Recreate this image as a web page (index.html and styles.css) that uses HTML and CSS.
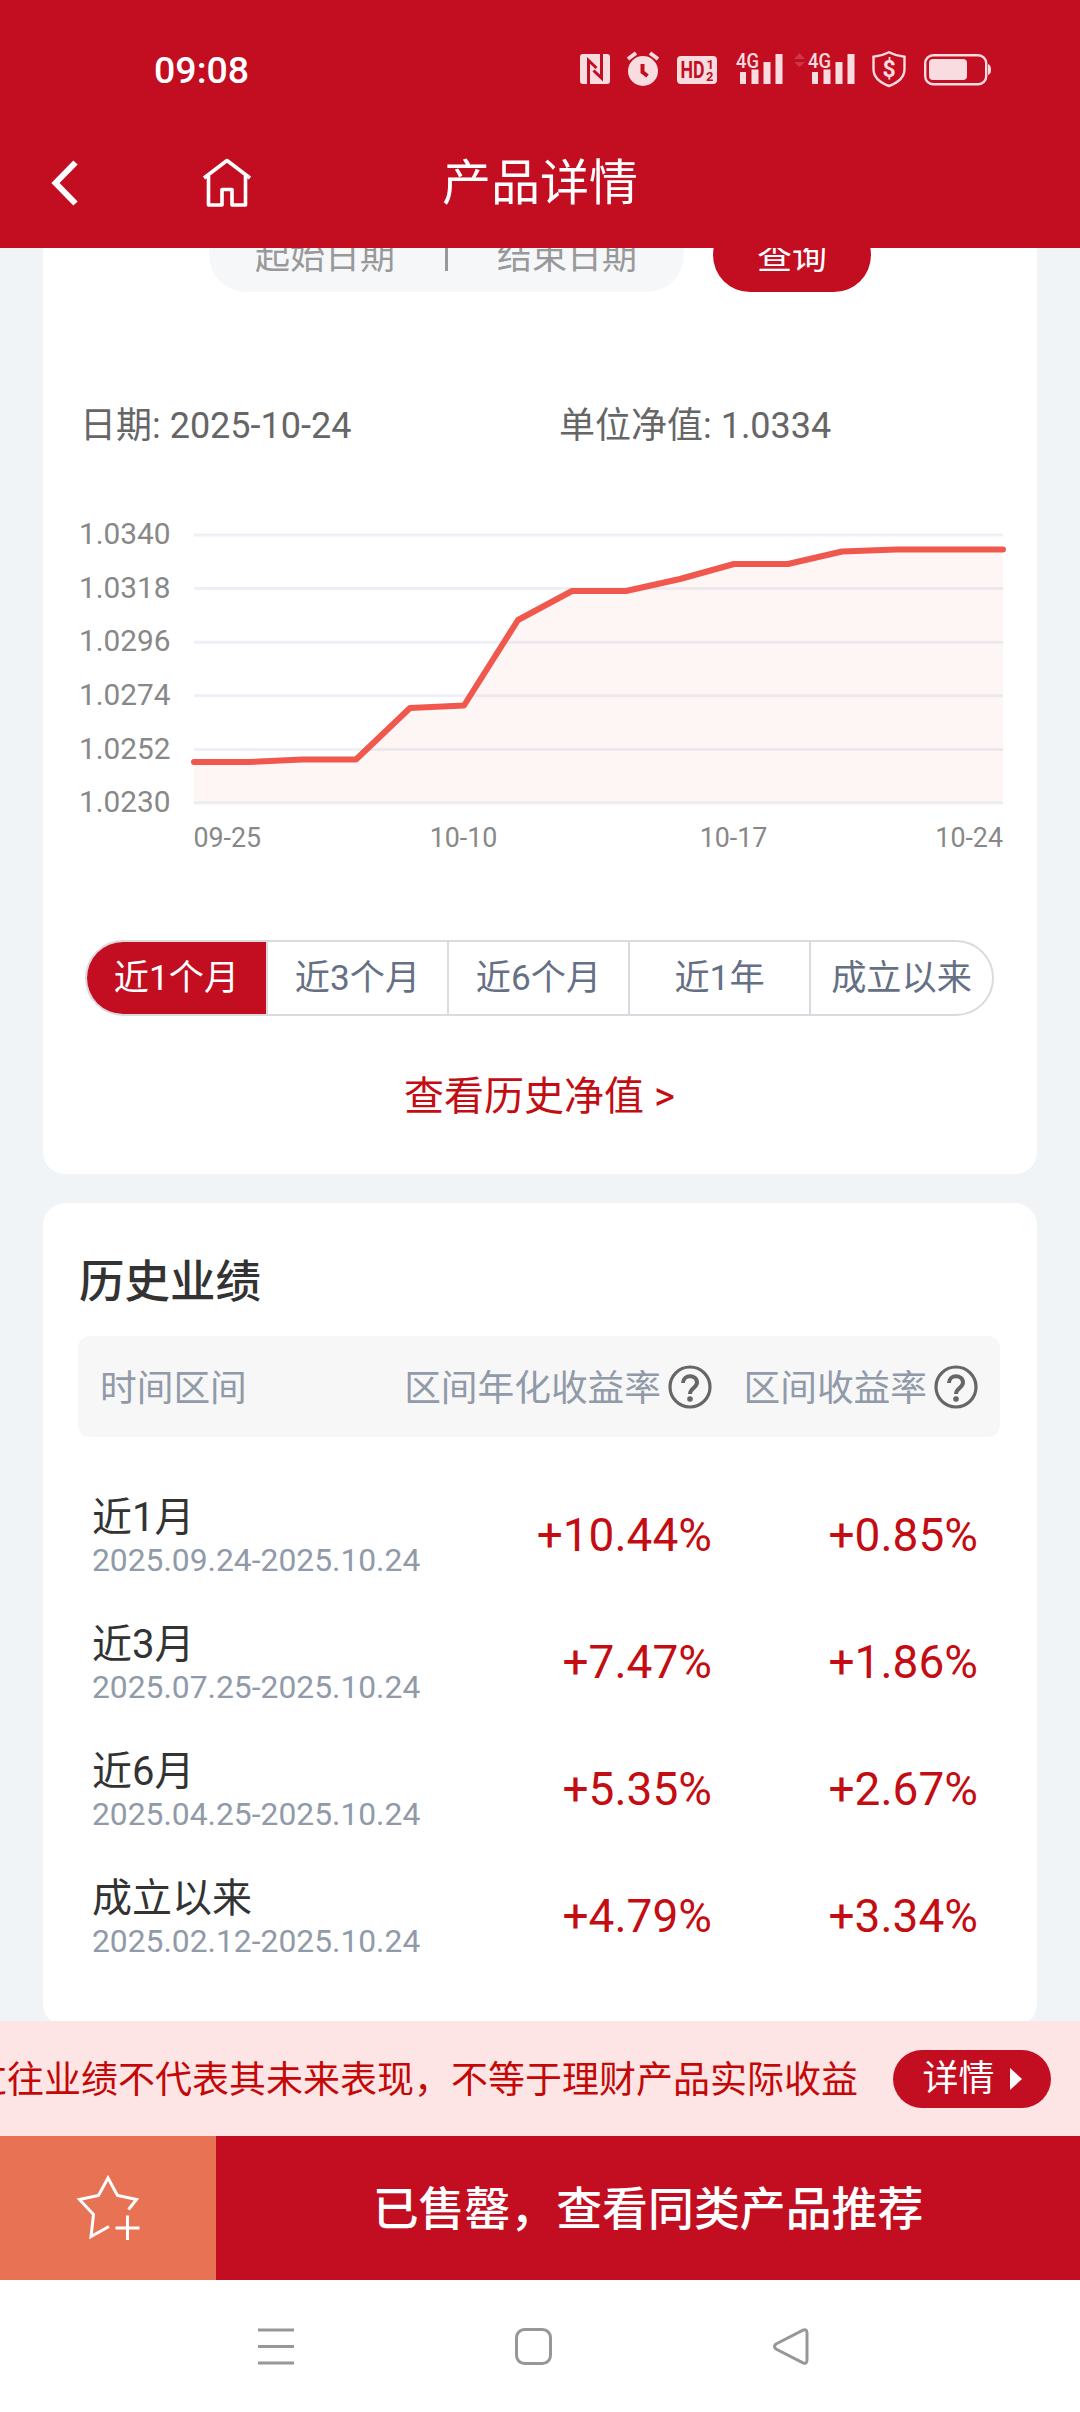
FILE: index.html
```html
<!DOCTYPE html>
<html lang="zh-CN">
	<head>
		<meta charset="utf-8">
		<title>产品详情</title>
		<link rel="stylesheet" href="styles.css">
	</head>
	<body>
		<header class="header">
			<div class="status">
				<span class="time">09:08</span>
				<svg class="status-icons" width="414" height="40" viewBox="0 0 414 40">
					<!-- nfc -->
					<rect x="0" y="4" width="30" height="30" rx="3"/>
					<path class="cut nfc" d="M8.500 34V10.500l8 7.500M21.500 4v24l-8-7.500"/>
					<!-- alarm -->
					<circle cx="63" cy="21" r="15"/>
					<path class="line" d="M48 9l8-6M78 9l-8-6"/>
					<path class="cut" d="M62.500 14v8l5 4"/>
					<!-- hd -->
					<rect x="97" y="6" width="40" height="28" rx="4"/>
					<text class="hd" x="100.500" y="28" textLength="24" lengthAdjust="spacingAndGlyphs">HD</text>
					<text class="hd-sub" x="126.500" y="19">1</text>
					<text class="hd-sub" x="126" y="30.500">2</text>
					<!-- signal -->
					<g id="signal">
						<text class="net" x="156" y="17.500" textLength="23" lengthAdjust="spacingAndGlyphs">4G</text>
						<path d="M160 22h6v12h-6zM171.500 19.500h7V34h-7zM183.500 12h7v22h-7zM195.500 4h7v30h-7z"/>
					</g>
					<path class="dim" d="M214 9l5.500-6 5.500 6zM214 12l5.500 5 5.500-5z"/>
					<use href="#signal" x="72"/>
					<!-- shield -->
					<path class="thin" d="M309 2.200c5 2.600 10 4 15.500 4.600V19c0 8-6 13.500-15.500 17-9.500-3.500-15.500-9-15.500-17V6.800c5.500-.6 10.500-2 15.500-4.600z"/>
					<text class="dollar" x="309" y="26.500">$</text>
					<!-- battery -->
					<rect class="thin" x="345.200" y="5.200" width="61" height="29" rx="8"/>
					<rect x="349" y="9" width="38" height="21" rx="4"/>
					<path d="M408 14q3 1 3 5.500t-3 5.500z"/>
				</svg>
			</div>
			<div class="nav">
				<svg class="back" width="28" height="48" viewBox="0 0 28 48"><path d="M25.500 3.500L5.500 24l20 20.500"/></svg>
				<svg class="home" width="52" height="52" viewBox="0 0 52 52"><path d="M4 21L27 3.500 50 21M8.500 19v29H22V32.500h10V48h13.500V19"/></svg>
				<h1>产品详情</h1>
			</div>
		</header>

		<main class="content">
			<section class="card">
				<div class="search">
					<div class="range"><span>起始日期</span><i></i><span>结束日期</span></div>
					<button class="query">查询</button>
				</div>
				<div class="info">
					<span>日期: 2025-10-24</span>
					<span>单位净值: 1.0334</span>
				</div>
				<svg class="chart" width="924" height="350" viewBox="0 0 924 350">
					<path class="grid" d="M114 25h809M114 78.600h809M114 132.200h809M114 185.800h809M114 239.400h809M114 293h809"/>
					<path class="area" d="M114 252h54l54-2.500h54l54-51.500 54-2.500L438 110l54-29h54l54-12 54-15h54l54-12.500 54-2h107V293H114z"/>
					<path class="trend" d="M114 252h54l54-2.500h54l54-51.500 54-2.500L438 110l54-29h54l54-12 54-15h54l54-12.500 54-2h107"/>
					<g class="y-axis">
						<text x="-1" y="34">1.0340</text>
						<text x="-1" y="88">1.0318</text>
						<text x="-1" y="141">1.0296</text>
						<text x="-1" y="195">1.0274</text>
						<text x="-1" y="249">1.0252</text>
						<text x="-1" y="302">1.0230</text>
					</g>
					<g class="x-axis">
						<text x="113.500" y="337">09-25</text>
						<text x="383.500" y="337" text-anchor="middle">10-10</text>
						<text x="653.500" y="337" text-anchor="middle">10-17</text>
						<text x="923" y="337" text-anchor="end">10-24</text>
					</g>
				</svg>
				<div class="tabs">
					<span class="tab active">近1个月</span>
					<span class="tab">近3个月</span>
					<span class="tab">近6个月</span>
					<span class="tab">近1年</span>
					<span class="tab">成立以来</span>
				</div>
				<a class="more">查看历史净值 &gt;</a>
			</section>

			<section class="card history">
				<h2>历史业绩</h2>
				<div class="row head">
					<span>时间区间</span>
					<span class="col"><span>区间年化收益率</span><svg class="help" width="44" height="44" viewBox="0 0 44 44"><circle cx="22" cy="22" r="20"/><path d="M15 18c0-9 14-9 14-.5 0 5.500-7 5.500-7 11.500"/><circle class="dot" cx="22" cy="34" r="2.800"/></svg></span>
					<span class="col"><span>区间收益率</span><svg class="help" width="44" height="44" viewBox="0 0 44 44"><circle cx="22" cy="22" r="20"/><path d="M15 18c0-9 14-9 14-.5 0 5.500-7 5.500-7 11.500"/><circle class="dot" cx="22" cy="34" r="2.800"/></svg></span>
				</div>
				<div class="rows">
					<div class="row">
						<div class="period"><b>近1月</b><small>2025.09.24-2025.10.24</small></div>
						<span class="rate">+10.44%</span>
						<span class="rate">+0.85%</span>
					</div>
					<div class="row">
						<div class="period"><b>近3月</b><small>2025.07.25-2025.10.24</small></div>
						<span class="rate">+7.47%</span>
						<span class="rate">+1.86%</span>
					</div>
					<div class="row">
						<div class="period"><b>近6月</b><small>2025.04.25-2025.10.24</small></div>
						<span class="rate">+5.35%</span>
						<span class="rate">+2.67%</span>
					</div>
					<div class="row">
						<div class="period"><b>成立以来</b><small>2025.02.12-2025.10.24</small></div>
						<span class="rate">+4.79%</span>
						<span class="rate">+3.34%</span>
					</div>
				</div>
			</section>
		</main>

		<div class="notice">
			<div class="marquee">过往业绩不代表其未来表现，不等于理财产品实际收益</div>
			<button class="detail">详情<svg width="12" height="22" viewBox="0 0 12 22"><path d="M0 0l12 11L0 22z"/></svg></button>
		</div>
		<div class="actions">
			<div class="fav">
				<svg width="64" height="66" viewBox="0 0 64 66"><path d="M52.500 34.500L60.500 24.500 41.500 20.500 32 3 22.500 20.500 3.500 24.500 17.500 39.500 15 61.500 33 51.500M39.500 53h24M51.500 40.500V65"/></svg>
			</div>
			<div class="buy">已售罄，查看同类产品推荐</div>
		</div>
		<div class="system">
			<svg width="36" height="37" viewBox="0 0 36 37"><path d="M0 2h36M0 18.500h36M0 35h36"/></svg>
			<svg width="37" height="37" viewBox="0 0 37 37"><rect x="1.500" y="1.500" width="34" height="34" rx="8"/></svg>
			<svg width="36" height="37" viewBox="0 0 36 37"><path d="M3 16L30 2.200q3.800-1.500 4 2.500v27.600q-.2 4-4 2.500L3 21q-3-2.500 0-5z"/></svg>
		</div>
	</body>
</html>
```
FILE: styles.css
```css
* {
	margin: 0; padding: 0;
	box-sizing: border-box;
}

body {
	display: flex;
	flex-direction: column;
	width: 1080px;
	height: 2412px;
	overflow: hidden;
	background: #f0f4f7;
	font-family: Roboto, "Noto Sans CJK SC", sans-serif;
	font-size: 36px;
	color: #333;
}

svg {
	display: block;
	flex: none;
}

button {
	border: none;
	background: #c30d21;
	color: #fff;
	font: inherit;
}

/* header */

.header {
	height: 248px;
	flex: none;
	background: #c30d21;
	color: #fff;
}

.status {
	display: flex;
	align-items: center;
	justify-content: space-between;
	height: 140px;
	padding: 0 86px 0 154px;
}

.time {
	font-size: 37.5px;
	font-weight: 500;
}

.status-icons {
	fill: #f9dce0;
}

.status-icons .cut {
	fill: none;
	stroke: #c30d21;
	stroke-width: 4;
}

.status-icons .nfc {
	stroke-width: 3;
}

.status-icons .line {
	stroke: #f9dce0;
	stroke-width: 4;
}

.status-icons .thin {
	fill: none;
	stroke: #f9dce0;
	stroke-width: 2.4;
}

.status-icons .hd {
	fill: #c30d21;
	font-size: 23px;
	font-weight: 700;
}

.status-icons .hd-sub {
	fill: #c30d21;
	font-size: 13px;
	font-weight: 700;
}

.status-icons .net {
	font-size: 21px;
	font-weight: 500;
}

.status-icons .dollar {
	font-size: 23px;
	font-weight: 700;
	text-anchor: middle;
}

.status-icons .dim {
	opacity: 0.2;
}

.nav {
	display: grid;
	grid-template-columns: 150px 242px 294px;
	align-items: center;
	height: 86px;
	padding-left: 50px;
}

.nav path {
	fill: none;
	stroke: #fff;
}

.back path {
	stroke-width: 6;
}

.home path {
	stroke-width: 3.6;
	stroke-linejoin: round;
}

.nav h1 {
	padding-top: 2px;
	font-size: 49px;
	font-weight: 400;
	line-height: 60px;
	white-space: nowrap;
}

/* cards */

.content {
	flex: 1;
	min-height: 0;
	overflow: hidden;
	padding: 0 43px;
}

.card {
	display: flow-root;
	padding: 0 36px 47px 37px;
	background: #fff;
	border-radius: 0 0 22px 22px;
}

.search {
	display: flex;
	gap: 29px;
	height: 74px;
	margin: -30px 0 0 129px;
	font-size: 35px;
}

.range {
	display: flex;
	align-items: center;
	justify-content: space-between;
	width: 475px;
	padding: 0 47px 3px 46px;
	border-radius: 37px;
	background: #f5f7f9;
	color: #999;
}

.range i {
	width: 3px;
	height: 34px;
	background: #999;
}

.query {
	width: 158px;
	padding-bottom: 3px;
	border-radius: 37px;
}

.info {
	display: grid;
	grid-template-columns: 479px 1fr;
	margin-top: 109px;
	line-height: 50px;
	color: #666;
}

.chart {
	margin-top: 59px;
	overflow: visible;
	fill: #888;
}

.grid {
	stroke: #edf1f5;
	stroke-width: 3;
}

.area {
	fill: #f4604e;
	opacity: 0.055;
}

.trend {
	fill: none;
	stroke: #f0584d;
	stroke-width: 6;
	stroke-linecap: round;
	stroke-linejoin: round;
}

.y-axis {
	font-size: 29.8px;
}

.x-axis {
	font-size: 26.8px;
}

.tabs {
	display: grid;
	grid-template-columns: 179px 181px 181px 181px 1fr;
	height: 76px;
	margin: 80px 7px 0 5px;
	border: 2px solid #d9dbe0;
	border-radius: 38px;
	overflow: hidden;
	font-size: 35.2px;
	line-height: 72px;
	text-align: center;
	color: #657084;
}

.tab + .tab {
	border-left: 2px solid #d9dbe0;
}

.tab.active {
	background: #c30d21;
	color: #fff;
}

.more {
	display: block;
	margin-top: 51px;
	padding-right: 2px;
	font-size: 40px;
	line-height: 60px;
	text-align: center;
	color: #c30d12;
}

.history {
	margin-top: 29px;
	padding: 50px 37px 46px 35px;
	border-radius: 22px;
}

.history h2 {
	padding-left: 1px;
	font-size: 45.5px;
	font-weight: 500;
	line-height: 60px;
}

.row {
	display: grid;
	grid-template-columns: 1fr 270px 266px;
	align-items: center;
	height: 127px;
	padding: 0 22px 0 14px;
	white-space: nowrap;
}

.head {
	height: 101px;
	margin-top: 23px;
	padding-left: 22px;
	border-radius: 12px;
	background: #f7f7f7;
	font-size: 36.7px;
	color: #909aa8;
}

.head span {
	padding-bottom: 4px;
}

.head .col {
	display: flex;
	align-items: center;
	justify-content: flex-end;
	gap: 7px;
	padding: 0;
}

.help {
	fill: none;
	stroke: #666;
	stroke-width: 3.2;
}

.help path {
	stroke-width: 4;
}

.help .dot {
	fill: #666;
	stroke: none;
}

.rows {
	margin-top: 35px;
}

.period {
	padding-top: 7px;
}

.period b,
.period small {
	display: block;
	font-weight: 400;
	line-height: 42px;
}

.period b {
	font-size: 40px;
}

.period small {
	font-size: 31.8px;
	color: #909aa8;
}

.rate {
	padding-bottom: 1px;
	font-size: 46px;
	text-align: right;
	color: #c30d12;
}

/* bottom */

.notice {
	display: flex;
	align-items: center;
	justify-content: space-between;
	flex: none;
	height: 115px;
	padding-right: 29px;
	background: #fee5e5;
}

.marquee {
	display: flex;
	justify-content: flex-end;
	width: 858px;
	padding-bottom: 3px;
	overflow: hidden;
	white-space: nowrap;
	font-size: 37px;
	color: #c40808;
}

.detail {
	display: flex;
	align-items: center;
	justify-content: center;
	gap: 15px;
	width: 158px;
	height: 58px;
	border-radius: 29px;
	line-height: 58px;
}

.detail svg {
	fill: #fff;
}

.actions {
	display: grid;
	grid-template-columns: 216px 1fr;
	flex: none;
	height: 144px;
	color: #fff;
}

.fav {
	display: flex;
	align-items: center;
	justify-content: center;
	background: #e77354;
}

.fav path {
	fill: none;
	stroke: #fff;
	stroke-width: 3;
}

.buy {
	background: #c30d21;
	font-size: 45.9px;
	font-weight: 500;
	line-height: 147px;
	height: 144px;
	text-align: center;
}

.system {
	display: flex;
	justify-content: space-between;
	flex: none;
	height: 132px;
	padding: 48px 271px 0 258px;
	background: #fff;
	fill: none;
	stroke: #979797;
	stroke-width: 3;
}
```
